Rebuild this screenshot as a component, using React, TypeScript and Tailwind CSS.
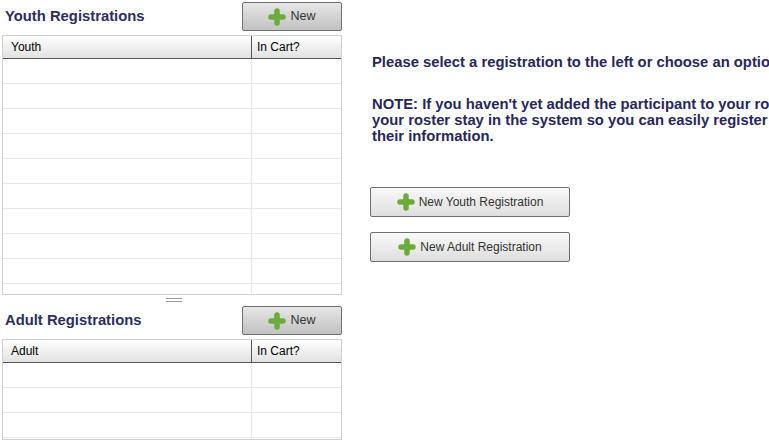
import React from 'react';

const font = { fontFamily: '"Liberation Sans", Arial, sans-serif' };

const PlusIcon = () => (
  <svg width="18" height="18" viewBox="0 0 18 18" className="shrink-0">
    <path
      d="M9 3v12M3 9h12"
      stroke="#6aab3b"
      strokeWidth="5.5"
      strokeLinecap="round"
      fill="none"
    />
  </svg>
);

const NewButton = () => (
  <button className="flex h-[29px] w-[100px] items-center justify-center gap-[4px] rounded-[2px] border border-[#6f6f6f] bg-gradient-to-b from-[#e6e6e6] to-[#c2c2c2] text-[12.5px] font-normal text-[#333]">
    <PlusIcon />
    <span>New</span>
  </button>
);

const Grid = ({ label, rows, bottom }: { label: string; rows: number; bottom: number }) => (
  <div className="ml-[2px] w-[340px] border border-[#cfcfcf]">
    <div className="flex h-[23px] border-b border-[#555] bg-gradient-to-b from-white to-[#e2e2e2] text-[12px] text-black">
      <div className="flex w-[249px] items-center border-r border-[#555] pl-[8px]">{label}</div>
      <div className="flex flex-1 items-center pl-[5px]">In Cart?</div>
    </div>
    {Array.from({ length: rows }).map((_, i) => (
      <div key={i} className="flex h-[25px] border-b border-[#e6e6e6]">
        <div className="w-[249px] border-r border-[#e6e6e6]" />
        <div className="flex-1" />
      </div>
    ))}
    <div className="flex" style={{ height: bottom }}>
      <div className="w-[249px] border-r border-[#e6e6e6]" />
      <div className="flex-1" />
    </div>
  </div>
);

const BigButton = ({ text }: { text: string }) => (
  <button className="flex h-[30px] w-[200px] items-center justify-center gap-[4px] rounded-[2px] border border-[#6f6f6f] bg-gradient-to-b from-[#f9f9f9] to-[#dedede] text-[12px] font-normal text-[#333]">
    <PlusIcon />
    <span>{text}</span>
  </button>
);

export default function App() {
  return (
    <div className="flex h-[445px] w-[769px] overflow-hidden bg-white" style={font}>
      {/* left column */}
      <div className="w-[345px] shrink-0">
        <div className="flex h-[35px] items-start justify-between pr-[3px] pt-[2px]">
          <h2 className="pl-[5px] pt-[6px] text-[14.8px] font-bold leading-[16px] text-[#2d2d5f]">Youth Registrations</h2>
          <NewButton />
        </div>
        <Grid label="Youth" rows={9} bottom={10} />
        <div className="flex h-[10px] justify-center pl-[2px] pt-[3px]">
          <div className="h-[4px] w-[16px] border-y border-[#9a9a9a]" />
        </div>
        <div className="flex h-[34px] items-start justify-between pr-[3px] pt-[1px]">
          <h2 className="pl-[5px] pt-[6px] text-[14.8px] font-bold leading-[16px] text-[#2d2d5f]">Adult Registrations</h2>
          <NewButton />
        </div>
        <Grid label="Adult" rows={3} bottom={1} />
      </div>

      {/* right column */}
      <div className="min-w-0 flex-1 whitespace-nowrap pl-[27px] pt-[54px] text-[14.8px] font-bold leading-[16px] text-[#27275a]">
        <p>Please select a registration to the left or choose an option below to get started.</p>
        <p className="mt-[26px]">
          NOTE: If you haven't yet added the participant to your roster, you will be able to do so during registration. Participants in
          <br />
          your roster stay in the system so you can easily register them for future events without having to re-enter
          <br />
          their information.
        </p>
        <div className="ml-[-2px] mt-[43px] flex flex-col gap-[15px]">
          <BigButton text="New Youth Registration" />
          <BigButton text="New Adult Registration" />
        </div>
      </div>
    </div>
  );
}
